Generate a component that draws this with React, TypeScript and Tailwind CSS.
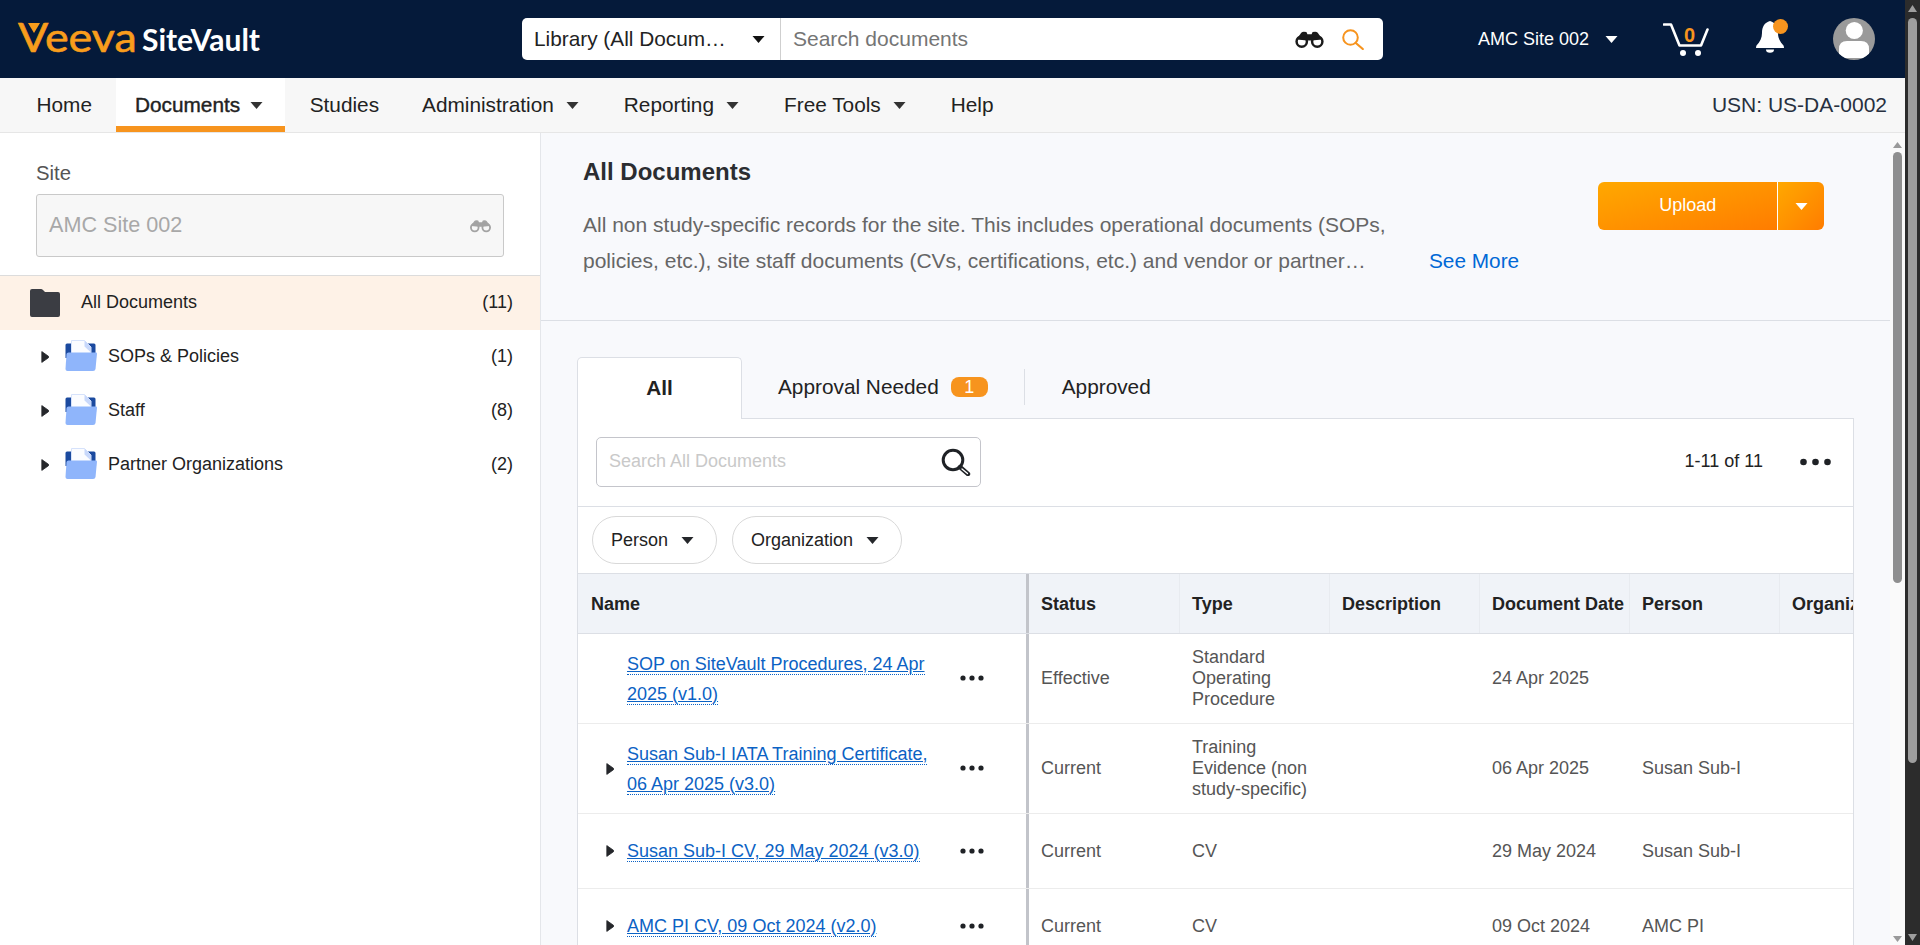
const font = "font-['Liberation_Sans',Arial,sans-serif]";

function Caret({ className = "" }: { className?: string }) {
  return (
    <svg viewBox="0 0 13 7" className={`w-[13px] h-[7px] shrink-0 ${className}`}>
      <path d="M0.5 0 H12.5 L6.5 7 Z" fill="currentColor" />
    </svg>
  );
}

function RowArrow({ className = "" }: { className?: string }) {
  return (
    <svg viewBox="0 0 8 12" className={`w-[8px] h-[12px] shrink-0 ${className}`}>
      <path d="M0.8 0.6 L7.4 5.2 Q8 6 7.4 6.8 L0.8 11.4 Z" fill="#25272b" stroke="#25272b" strokeWidth="0.8" strokeLinejoin="round" />
    </svg>
  );
}

function Binoculars({ color, className = "" }: { color: string; className?: string }) {
  return (
    <svg viewBox="0 0 30 16" className={className}>
      <path d="M2.5 8 L7 1.5 Q8 0.5 9.5 0.5 L12 0.8 L13 3 H17 L18 0.8 L20.5 0.5 Q22 0.5 23 1.5 L27.5 8 L17 9 H13 Z" fill={color} />
      <circle cx="7.5" cy="10" r="5" fill="none" stroke={color} strokeWidth="2.4" />
      <circle cx="22.5" cy="10" r="5" fill="none" stroke={color} strokeWidth="2.4" />
    </svg>
  );
}

function Cart() {
  return (
    <div className="relative w-[46px] h-[34px] shrink-0">
      <svg viewBox="0 0 46 34" className="w-[46px] h-[34px]">
        <path d="M1 1.5 H8 L16.5 22.5 H38 L44.5 6.5" fill="none" stroke="#fff" strokeWidth="2.6" strokeLinecap="round" strokeLinejoin="round" />
        <circle cx="20" cy="30" r="3" fill="#fff" />
        <circle cx="35" cy="30" r="3" fill="#fff" />
      </svg>
      <span className="absolute left-[21px] top-[2px] text-[20px] leading-[20px] font-bold text-[#f7941e]">0</span>
    </div>
  );
}

function Bell() {
  return (
    <div className="relative w-[32px] h-[36px] shrink-0">
      <svg viewBox="0 0 28 32" className="w-[28px] h-[32px] mt-[1px]">
        <path d="M14 0 C8.5 1.5 6 6 6 12 C6 17 4 21 0.5 24.5 Q0 25.5 0 27 H28 Q28 25.5 27.5 24.5 C24 21 22 17 22 12 C22 6 19.5 1.5 14 0 Z" fill="#fff" />
        <path d="M10 28.5 H18 A4 3.2 0 0 1 10 28.5 Z" fill="#fff" />
      </svg>
      <span className="absolute left-[17px] top-[-2px] w-[15px] h-[15px] rounded-full bg-[#f7941e]" />
    </div>
  );
}

function Avatar() {
  return (
    <svg viewBox="0 0 42 42" className="w-[42px] h-[42px] shrink-0">
      <clipPath id="avatarClip">
        <circle cx="21" cy="21" r="21" />
      </clipPath>
      <circle cx="21" cy="21" r="21" fill="#9a9a9a" />
      <g clipPath="url(#avatarClip)">
        <circle cx="21.3" cy="12.5" r="8.6" fill="#fff" />
        <path d="M6 31 Q6 23 14 23 H28 Q36 23 36 31 V40 H6 Z" fill="#fff" />
      </g>
    </svg>
  );
}

function DarkFolder() {
  return (
    <svg viewBox="0 0 30 28" className="w-[30px] h-[28px] shrink-0">
      <path d="M2 0 H11 Q12 0 13 1 L15 3 H28 Q30 3 30 5 V26 Q30 28 28 28 H2 Q0 28 0 26 V2 Q0 0 2 0 Z" fill="#3b3d43" />
    </svg>
  );
}

function BlueFolder() {
  return (
    <svg viewBox="0 0 32 32" className="w-[32px] h-[32px] shrink-0">
      <path d="M2 3.5 H29 Q30.5 3.5 30.5 5 V18 H0.5 V5 Q0.5 3.5 2 3.5 Z" fill="#1b4a9f" />
      <path d="M6.5 0.5 H19.5 L26 7 V16 H6.5 Z" fill="#fbfcff" stroke="#d6e2fb" strokeWidth="1" />
      <path d="M19.5 0.5 L26 7 V12.5 L19.5 6.5 Z" fill="#c8d8fb" />
      <path d="M3.5 12.5 H31 Q32 12.5 32 13.5 L30.5 29 Q30.3 31 28 31 H2.5 Q0.5 31 0.5 29 L1.5 14 Q1.7 12.5 3.5 12.5 Z" fill="#8fb5fb" />
    </svg>
  );
}

function Dots({ big = false }: { big?: boolean }) {
  if (big) {
    return (
      <svg viewBox="0 0 31 8" className="w-[31px] h-[8px] shrink-0">
        <circle cx="3.5" cy="4" r="3.3" fill="#1f2226" />
        <circle cx="15.5" cy="4" r="3.3" fill="#1f2226" />
        <circle cx="27.5" cy="4" r="3.3" fill="#1f2226" />
      </svg>
    );
  }
  return (
    <svg viewBox="0 0 24 6" className="w-[24px] h-[6px] shrink-0">
      <circle cx="3" cy="3" r="2.6" fill="#1f2226" />
      <circle cx="12" cy="3" r="2.6" fill="#1f2226" />
      <circle cx="21" cy="3" r="2.6" fill="#1f2226" />
    </svg>
  );
}

const navItems = [
  { label: "Home" },
  { label: "Documents", caret: true, active: true },
  { label: "Studies" },
  { label: "Administration", caret: true },
  { label: "Reporting", caret: true },
  { label: "Free Tools", caret: true },
  { label: "Help" },
];

const folders = [
  { name: "SOPs & Policies", count: "(1)" },
  { name: "Staff", count: "(8)" },
  { name: "Partner Organizations", count: "(2)" },
];

const columns = ["Type", "Description", "Document Date", "Person", "Organization"];

const docs = [
  {
    name: "SOP on SiteVault Procedures, 24 Apr 2025 (v1.0)",
    status: "Effective",
    type: "Standard Operating Procedure",
    date: "24 Apr 2025",
    person: "",
    arrow: false,
    h: "h-[90px]",
  },
  {
    name: "Susan Sub-I IATA Training Certificate, 06 Apr 2025 (v3.0)",
    status: "Current",
    type: "Training Evidence (non study-specific)",
    date: "06 Apr 2025",
    person: "Susan Sub-I",
    arrow: true,
    h: "h-[90px]",
  },
  {
    name: "Susan Sub-I CV, 29 May 2024 (v3.0)",
    status: "Current",
    type: "CV",
    date: "29 May 2024",
    person: "Susan Sub-I",
    arrow: true,
    h: "h-[75px]",
  },
  {
    name: "AMC PI CV, 09 Oct 2024 (v2.0)",
    status: "Current",
    type: "CV",
    date: "09 Oct 2024",
    person: "AMC PI",
    arrow: true,
    h: "h-[75px]",
  },
];

function Header() {
  return (
    <div className="h-[78px] bg-[#051a3a] flex items-center shrink-0">
      {/* Logo */}
      <div className="w-[522px] pl-[18px] flex items-center shrink-0">
        <div className="relative w-[117px] h-[40px] -mt-[4px]">
          <span className="block origin-left scale-x-[1.12] font-['Lato',sans-serif] text-[40px] leading-[40px] text-[#f99d1c] [-webkit-text-stroke:0.6px_#f99d1c]">Veeva</span>
          <svg viewBox="0 0 12 10" className="absolute left-[10px] top-[6px] w-[12px] h-[10px]">
            <path d="M0 0 H12 L6 10 Z" fill="#f99d1c" />
          </svg>
        </div>
        <span className="font-['Lato',sans-serif] font-bold text-[30px] leading-[40px] text-white ml-[7px] -mt-[1px]">SiteVault</span>
      </div>

      {/* Search */}
      <div className="w-[861px] h-[42px] bg-white rounded-[5px] flex items-center shrink-0">
        <div className="w-[259px] h-full flex items-center pl-[12px] pr-[15px] border-r border-[#cfcfcf] text-[20.8px] text-[#222]">
          <span className="flex-1 whitespace-nowrap">Library (All Docum…</span>
          <Caret className="text-[#111]" />
        </div>
        <span className="pl-[12px] text-[21px] text-[#757575] flex-1">Search documents</span>
        <Binoculars color="#1b1b1b" className="w-[31px] h-[17px]" />
        <svg viewBox="0 0 22 21" className="w-[22px] h-[21px] ml-[17px] mr-[19px]">
          <circle cx="8.5" cy="8.5" r="7.3" fill="none" stroke="#f7941e" strokeWidth="2" />
          <path d="M13.8 14 L20.8 20" stroke="#f7941e" strokeWidth="2.2" strokeLinecap="round" />
        </svg>
      </div>

      {/* Right side */}
      <span className="ml-[95px] text-[18px] text-white whitespace-nowrap">AMC Site 002</span>
      <Caret className="ml-[16px] text-white" />
      <div className="ml-[45px] mt-[2px]"><Cart /></div>
      <div className="ml-[47px] -mt-[1px]"><Bell /></div>
      <div className="ml-[45px]"><Avatar /></div>
    </div>
  );
}

function Nav() {
  return (
    <div className="h-[55px] bg-[#f7f7f7] border-b border-[#e6e6e6] flex items-stretch pl-[18px] pr-[18px] gap-[6px] shrink-0">
      {navItems.map((item) => (
        <div
          key={item.label}
          className={`h-[54px] pt-[6px] pl-[18.5px] flex items-center text-[20.8px] text-[#222] border-b-[6px] whitespace-nowrap ${
            item.active
              ? "gap-[10px] pr-[22px] bg-white border-[#f7941e] [-webkit-text-stroke:0.4px_#222]"
              : item.caret
                ? "gap-[12px] pr-[20.5px] border-transparent"
                : "pr-[18.5px] border-transparent"
          }`}
        >
          <span>{item.label}</span>
          {item.caret && <Caret className="text-[#333]" />}
        </div>
      ))}
      <span className="ml-auto h-[54px] leading-[54px] text-[21px] text-[#27303f]">USN: US-DA-0002</span>
    </div>
  );
}

function Sidebar() {
  return (
    <div className="w-[541px] shrink-0 bg-white border-r border-[#e4e6ea] text-[18px] text-[#222]">
      <div className="pt-[26px] px-[36px] h-[142px]">
        <div className="text-[20.3px] leading-[28px] text-[#555]">Site</div>
        <div className="mt-[7px] w-[468px] h-[63px] bg-[#f7f7f7] border border-[#c9c9c9] rounded-[3px] flex items-center justify-between pl-[12px] pr-[11px]">
          <span className="text-[21.6px] text-[#a8a8a8]">AMC Site 002</span>
          <Binoculars color="#a3a3a3" className="w-[23px] h-[14px]" />
        </div>
      </div>
      <div className="h-[55px] bg-[#fef2e7] border-t border-[#dcdcdc] flex items-center pl-[30px] pr-[27px]">
        <DarkFolder />
        <span className="ml-[21px] flex-1 -mt-[2px]">All Documents</span>
        <span className="-mt-[1px]">(11)</span>
      </div>
      {folders.map((folder) => (
        <div key={folder.name} className="h-[54px] flex items-center pl-[41px] pr-[27px]">
          <RowArrow />
          <div className="ml-[16px] -mt-[3px]"><BlueFolder /></div>
          <span className="ml-[11px] flex-1 -mt-[2px]">{folder.name}</span>
          <span className="-mt-[1px]">{folder.count}</span>
        </div>
      ))}
    </div>
  );
}

function DocTable() {
  return (
    <div className="text-[18px]">
      <div className="h-[60px] flex bg-[#f0f3f8] border-b border-[#dcdfe5] font-bold text-[#222]">
        <div className="w-[451px] shrink-0 pl-[13px] pt-[1px] flex items-center border-r-[3px] border-[#c2c4ca]">Name</div>
        <div className="w-[150px] shrink-0 pl-[12px] pt-[1px] flex items-center">Status</div>
        {columns.map((col) => (
          <div key={col} className="w-[150px] shrink-0 pl-[12px] pt-[1px] flex items-center border-l border-[#e8ebf0] whitespace-nowrap">{col}</div>
        ))}
      </div>
      {docs.map((doc) => (
        <div key={doc.name} className={`${doc.h} flex border-b border-[#ececec] text-[#555]`}>
          <div className="w-[451px] shrink-0 flex items-center border-r-[3px] border-[#c2c4ca]">
            <div className="w-[49px] shrink-0 pl-[28px]">{doc.arrow && <RowArrow />}</div>
            <div className="w-[310px] shrink-0 leading-[30px]">
              <a className="text-[#0b62c4] underline border-b border-dotted border-[#0b62c4]">{doc.name}</a>
            </div>
            <div className="ml-[23px] -mt-[1px]"><Dots /></div>
          </div>
          <div className="w-[150px] shrink-0 pl-[12px] flex items-center">{doc.status}</div>
          <div className="w-[150px] shrink-0 pl-[13px] pr-[14px] flex items-center leading-[21px]">{doc.type}</div>
          <div className="w-[150px] shrink-0" />
          <div className="w-[150px] shrink-0 pl-[13px] flex items-center whitespace-nowrap">{doc.date}</div>
          <div className="w-[150px] shrink-0 pl-[13px] flex items-center whitespace-nowrap">{doc.person}</div>
          <div className="w-[150px] shrink-0" />
        </div>
      ))}
    </div>
  );
}

function Main() {
  return (
    <div className="flex-1 min-w-0 overflow-hidden bg-[#f8f9fc] text-[#222]">
      {/* Page heading */}
      <div className="h-[188px] border-b border-[#dcdfe5] flex pl-[42px]">
        <div className="w-[846px] shrink-0 pt-[24px]">
          <div className="text-[24px] leading-[30px] font-bold text-[#2b2d31]">All Documents</div>
          <div className="mt-[20px] text-[21px] leading-[36px] text-[#666] whitespace-nowrap">
            All non study-specific records for the site. This includes operational documents (SOPs,
            <br />
            policies, etc.), site staff documents (CVs, certifications, etc.) and vendor or partner…
          </div>
        </div>
        <span className="pt-[110px] text-[20.8px] leading-[36px] text-[#0068d6] whitespace-nowrap h-fit">See More</span>
        <div className="ml-[79px] mt-[49px] w-[226px] h-[48px] flex rounded-[6px] overflow-hidden text-white">
          <div className="w-[180px] pb-[2px] flex items-center justify-center text-[18px] bg-gradient-to-br from-[#ffa800] to-[#ff7c00] border-r border-white">Upload</div>
          <div className="flex-1 flex items-center justify-center bg-gradient-to-br from-[#ffa800] to-[#ff7c00]"><Caret /></div>
        </div>
      </div>

      {/* Tabs */}
      <div className="pl-[36px] pr-[36px] pt-[36px]">
        <div className="h-[62px] flex items-stretch text-[20.8px]">
          <div className="w-[165px] h-[62px] pb-[2px] bg-white border border-b-0 border-[#dcdfe5] rounded-t-[5px] flex items-center justify-center font-bold relative z-10">All</div>
          <div className="flex items-center pl-[36px] pb-[2px]">
            <span>Approval Needed</span>
            <span className="ml-[12px] w-[37px] h-[20px] rounded-[8px] bg-[#f7941e] text-white text-[18px] leading-[20px] text-center">1</span>
          </div>
          <div className="ml-[36px] w-px h-[36px] bg-[#dcdfe5] mt-[12px]" />
          <div className="pl-[37px] flex items-center pb-[2px]">Approved</div>
        </div>

        {/* Panel */}
        <div className="-mt-px bg-white border border-[#dcdfe5] overflow-hidden h-[600px]">
          <div className="h-[88px] pb-[2px] border-b border-[#dcdfe5] flex items-center pl-[18px] pr-[22px] text-[18px]">
            <div className="w-[385px] h-[50px] border border-[#c4c5cb] rounded-[5px] flex items-center pl-[12px] pr-[9px]">
              <span className="flex-1 text-[#c9c9c9]">Search All Documents</span>
              <svg viewBox="0 0 30 28" className="w-[30px] h-[28px]">
                <circle cx="12" cy="12" r="9.8" fill="none" stroke="#1f2226" strokeWidth="3" />
                <path d="M19 19 L27 26" stroke="#1f2226" strokeWidth="4.4" strokeLinecap="round" />
                <path d="M21 21 L26.5 25.6" stroke="#fff" strokeWidth="1.3" strokeLinecap="round" />
              </svg>
            </div>
            <span className="ml-auto">1-11 of 11</span>
            <div className="ml-[37px]"><Dots big /></div>
          </div>
          <div className="h-[67px] border-b border-[#dcdfe5] flex items-center pl-[14px] gap-[15px] text-[18px]">
            <div className="h-[48px] w-[125px] pr-[4px] rounded-full border border-[#d9d9d9] flex items-center justify-center gap-[13px]">
              Person <Caret className="text-[#25272b]" />
            </div>
            <div className="h-[48px] w-[170px] pr-[4px] rounded-full border border-[#d9d9d9] flex items-center justify-center gap-[13px]">
              Organization <Caret className="text-[#25272b]" />
            </div>
          </div>
          <DocTable />
        </div>
      </div>
    </div>
  );
}

function InnerScrollbar() {
  return (
    <div className="w-[15px] shrink-0 bg-[#fafafa] flex flex-col items-center pt-[9px] pb-[3px]">
      <svg viewBox="0 0 9 6" className="w-[9px] h-[6px] shrink-0"><path d="M4.5 0 L9 6 H0 Z" fill="#9a9a9a" /></svg>
      <div className="mt-[4px] w-[9px] h-[431px] rounded-full bg-[#8f8f8f]" />
      <div className="flex-1" />
      <svg viewBox="0 0 9 6" className="w-[9px] h-[6px] shrink-0"><path d="M4.5 6 L9 0 H0 Z" fill="#9a9a9a" /></svg>
    </div>
  );
}

function OuterScrollbar() {
  return (
    <div className="w-[15px] shrink-0 bg-[#2c2c2c] flex flex-col items-center pt-[5px] pb-[4px]">
      <svg viewBox="0 0 9 7" className="w-[9px] h-[7px] shrink-0"><path d="M4.5 0 L9 7 H0 Z" fill="#9e9e9e" /></svg>
      <div className="mt-[6px] w-[9px] h-[745px] rounded-full bg-[#9e9e9e]" />
      <div className="flex-1" />
      <svg viewBox="0 0 9 7" className="w-[9px] h-[7px] shrink-0"><path d="M4.5 7 L9 0 H0 Z" fill="#9e9e9e" /></svg>
    </div>
  );
}

export default function App() {
  return (
    <div className={`h-[945px] w-[1920px] overflow-hidden flex ${font}`}>
      <div className="flex-1 min-w-0 flex flex-col">
        <Header />
        <Nav />
        <div className="flex-1 min-h-0 flex">
          <Sidebar />
          <Main />
          <InnerScrollbar />
        </div>
      </div>
      <OuterScrollbar />
    </div>
  );
}
